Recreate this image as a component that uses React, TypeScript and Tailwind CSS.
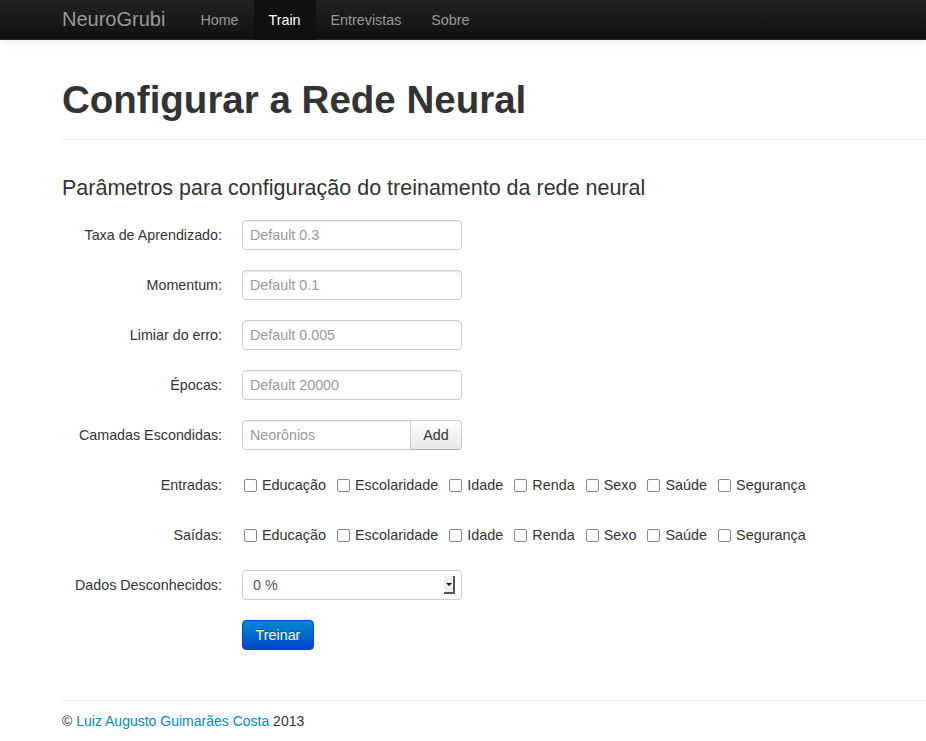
import { FC } from "react";

const font = { fontFamily: '"Liberation Sans", Arial, sans-serif' };

const TextRow: FC<{ label: string; placeholder: string }> = ({ label, placeholder }) => (
  <div className="flex items-center mb-5 h-[30px]">
    <label className="w-[160px] text-right text-[14.3px] text-[#333] pr-0">{label}</label>
    <input
      className="ml-5 w-[220px] h-[30px] border border-[#ccc] rounded-[4px] px-[7px] text-[14.3px] text-[#555] placeholder:text-[#999] shadow-[inset_0_1px_1px_rgba(0,0,0,0.075)] outline-none"
      placeholder={placeholder}
    />
  </div>
);

const options = ["Educação", "Escolaridade", "Idade", "Renda", "Sexo", "Saúde", "Segurança"];

const CheckRow: FC<{ label: string }> = ({ label }) => (
  <div className="flex items-center mb-5 h-[30px]">
    <label className="w-[160px] text-right text-[14.3px] text-[#333]">{label}</label>
    <div className="ml-5 flex items-center gap-[11px] pl-[2px]">
      {options.map((o) => (
        <label key={o} className="flex items-center gap-[5px] text-[14.4px] text-[#333]">
          <span className="w-[13px] h-[13px] border border-[#888] rounded-[2px] bg-white inline-block" />
          {o}
        </label>
      ))}
    </div>
  </div>
);

export default function App() {
  const navItems = [
    { label: "Home", active: false },
    { label: "Train", active: true },
    { label: "Entrevistas", active: false },
    { label: "Sobre", active: false },
  ];

  return (
    <div style={font} className="min-h-[741px] bg-white overflow-hidden">
      <header className="h-10 bg-gradient-to-b from-[#222] to-[#111] border-b border-[#252525] shadow-[0_1px_10px_rgba(0,0,0,0.1)] flex items-center pl-[62px]">
        <a className="text-[20px] text-[#999] pr-[20px] leading-10 -mt-[2px]">NeuroGrubi</a>
        <nav className="flex h-10">
          {navItems.map((item) => (
            <a
              key={item.label}
              className={`px-[15px] leading-10 text-[14.3px] ${
                item.active ? "bg-[#111] text-white" : "text-[#999]"
              }`}
            >
              {item.label}
            </a>
          ))}
        </nav>
      </header>

      <main className="pl-[62px]">
        <div className="border-b border-[#eee] pt-[39px] pb-[18px] w-[1000px]">
          <h1 className="text-[38.5px] font-bold text-[#333] leading-[1.1]">Configurar a Rede Neural</h1>
        </div>

        <h3 className="text-[21.5px] text-[#333] mt-[36px] mb-[20px] leading-[24px]">
          Parâmetros para configuração do treinamento da rede neural
        </h3>

        <form>
          <TextRow label="Taxa de Aprendizado:" placeholder="Default 0.3" />
          <TextRow label="Momentum:" placeholder="Default 0.1" />
          <TextRow label="Limiar do erro:" placeholder="Default 0.005" />
          <TextRow label="Épocas:" placeholder="Default 20000" />

          <div className="flex items-center mb-5 h-[30px]">
            <label className="w-[160px] text-right text-[14.3px] text-[#333]">Camadas Escondidas:</label>
            <div className="ml-5 flex">
              <input
                className="w-[169px] h-[30px] border border-[#ccc] rounded-l-[4px] px-[7px] text-[14.3px] placeholder:text-[#999] shadow-[inset_0_1px_1px_rgba(0,0,0,0.075)] outline-none"
                placeholder="Neorônios"
              />
              <button
                type="button"
                className="w-[51px] h-[30px] border border-l-0 border-[#ccc] border-b-[#b3b3b3] rounded-r-[4px] bg-gradient-to-b from-white to-[#e6e6e6] text-[14.3px] text-[#333]"
              >
                Add
              </button>
            </div>
          </div>

          <CheckRow label="Entradas:" />
          <CheckRow label="Saídas:" />

          <div className="flex items-center mb-5 h-[30px]">
            <label className="w-[160px] text-right text-[14.3px] text-[#333]">Dados Desconhecidos:</label>
            <div className="ml-5 w-[220px] h-[30px] border border-[#ccc] rounded-[4px] flex items-center justify-between pl-[10px] pr-[6px] text-[14.3px] text-[#555]">
              <span>0 %</span>
              <span className="w-[11px] h-[18px] bg-[#eee] border-r-2 border-b-2 border-[#555] flex items-center justify-center">
                <span className="w-0 h-0 border-l-[3px] border-r-[3px] border-t-[3px] border-l-transparent border-r-transparent border-t-[#111]" />
              </span>
            </div>
          </div>

          <div className="ml-[180px] mb-5">
            <button
              type="button"
              className="w-[72px] h-[30px] rounded-[4px] border border-[#04c] bg-gradient-to-b from-[#08c] to-[#04c] text-white text-[14.3px] [text-shadow:0_-1px_0_rgba(0,0,0,0.25)]"
            >
              Treinar
            </button>
          </div>
        </form>

        <footer className="mt-[50px] border-t border-[#eee] w-[1000px] pt-[10px]">
          <p className="text-[14px] text-[#333] leading-5">
            © <a className="text-[#08c]">Luiz Augusto Guimarães Costa</a> 2013
          </p>
        </footer>
      </main>
    </div>
  );
}
